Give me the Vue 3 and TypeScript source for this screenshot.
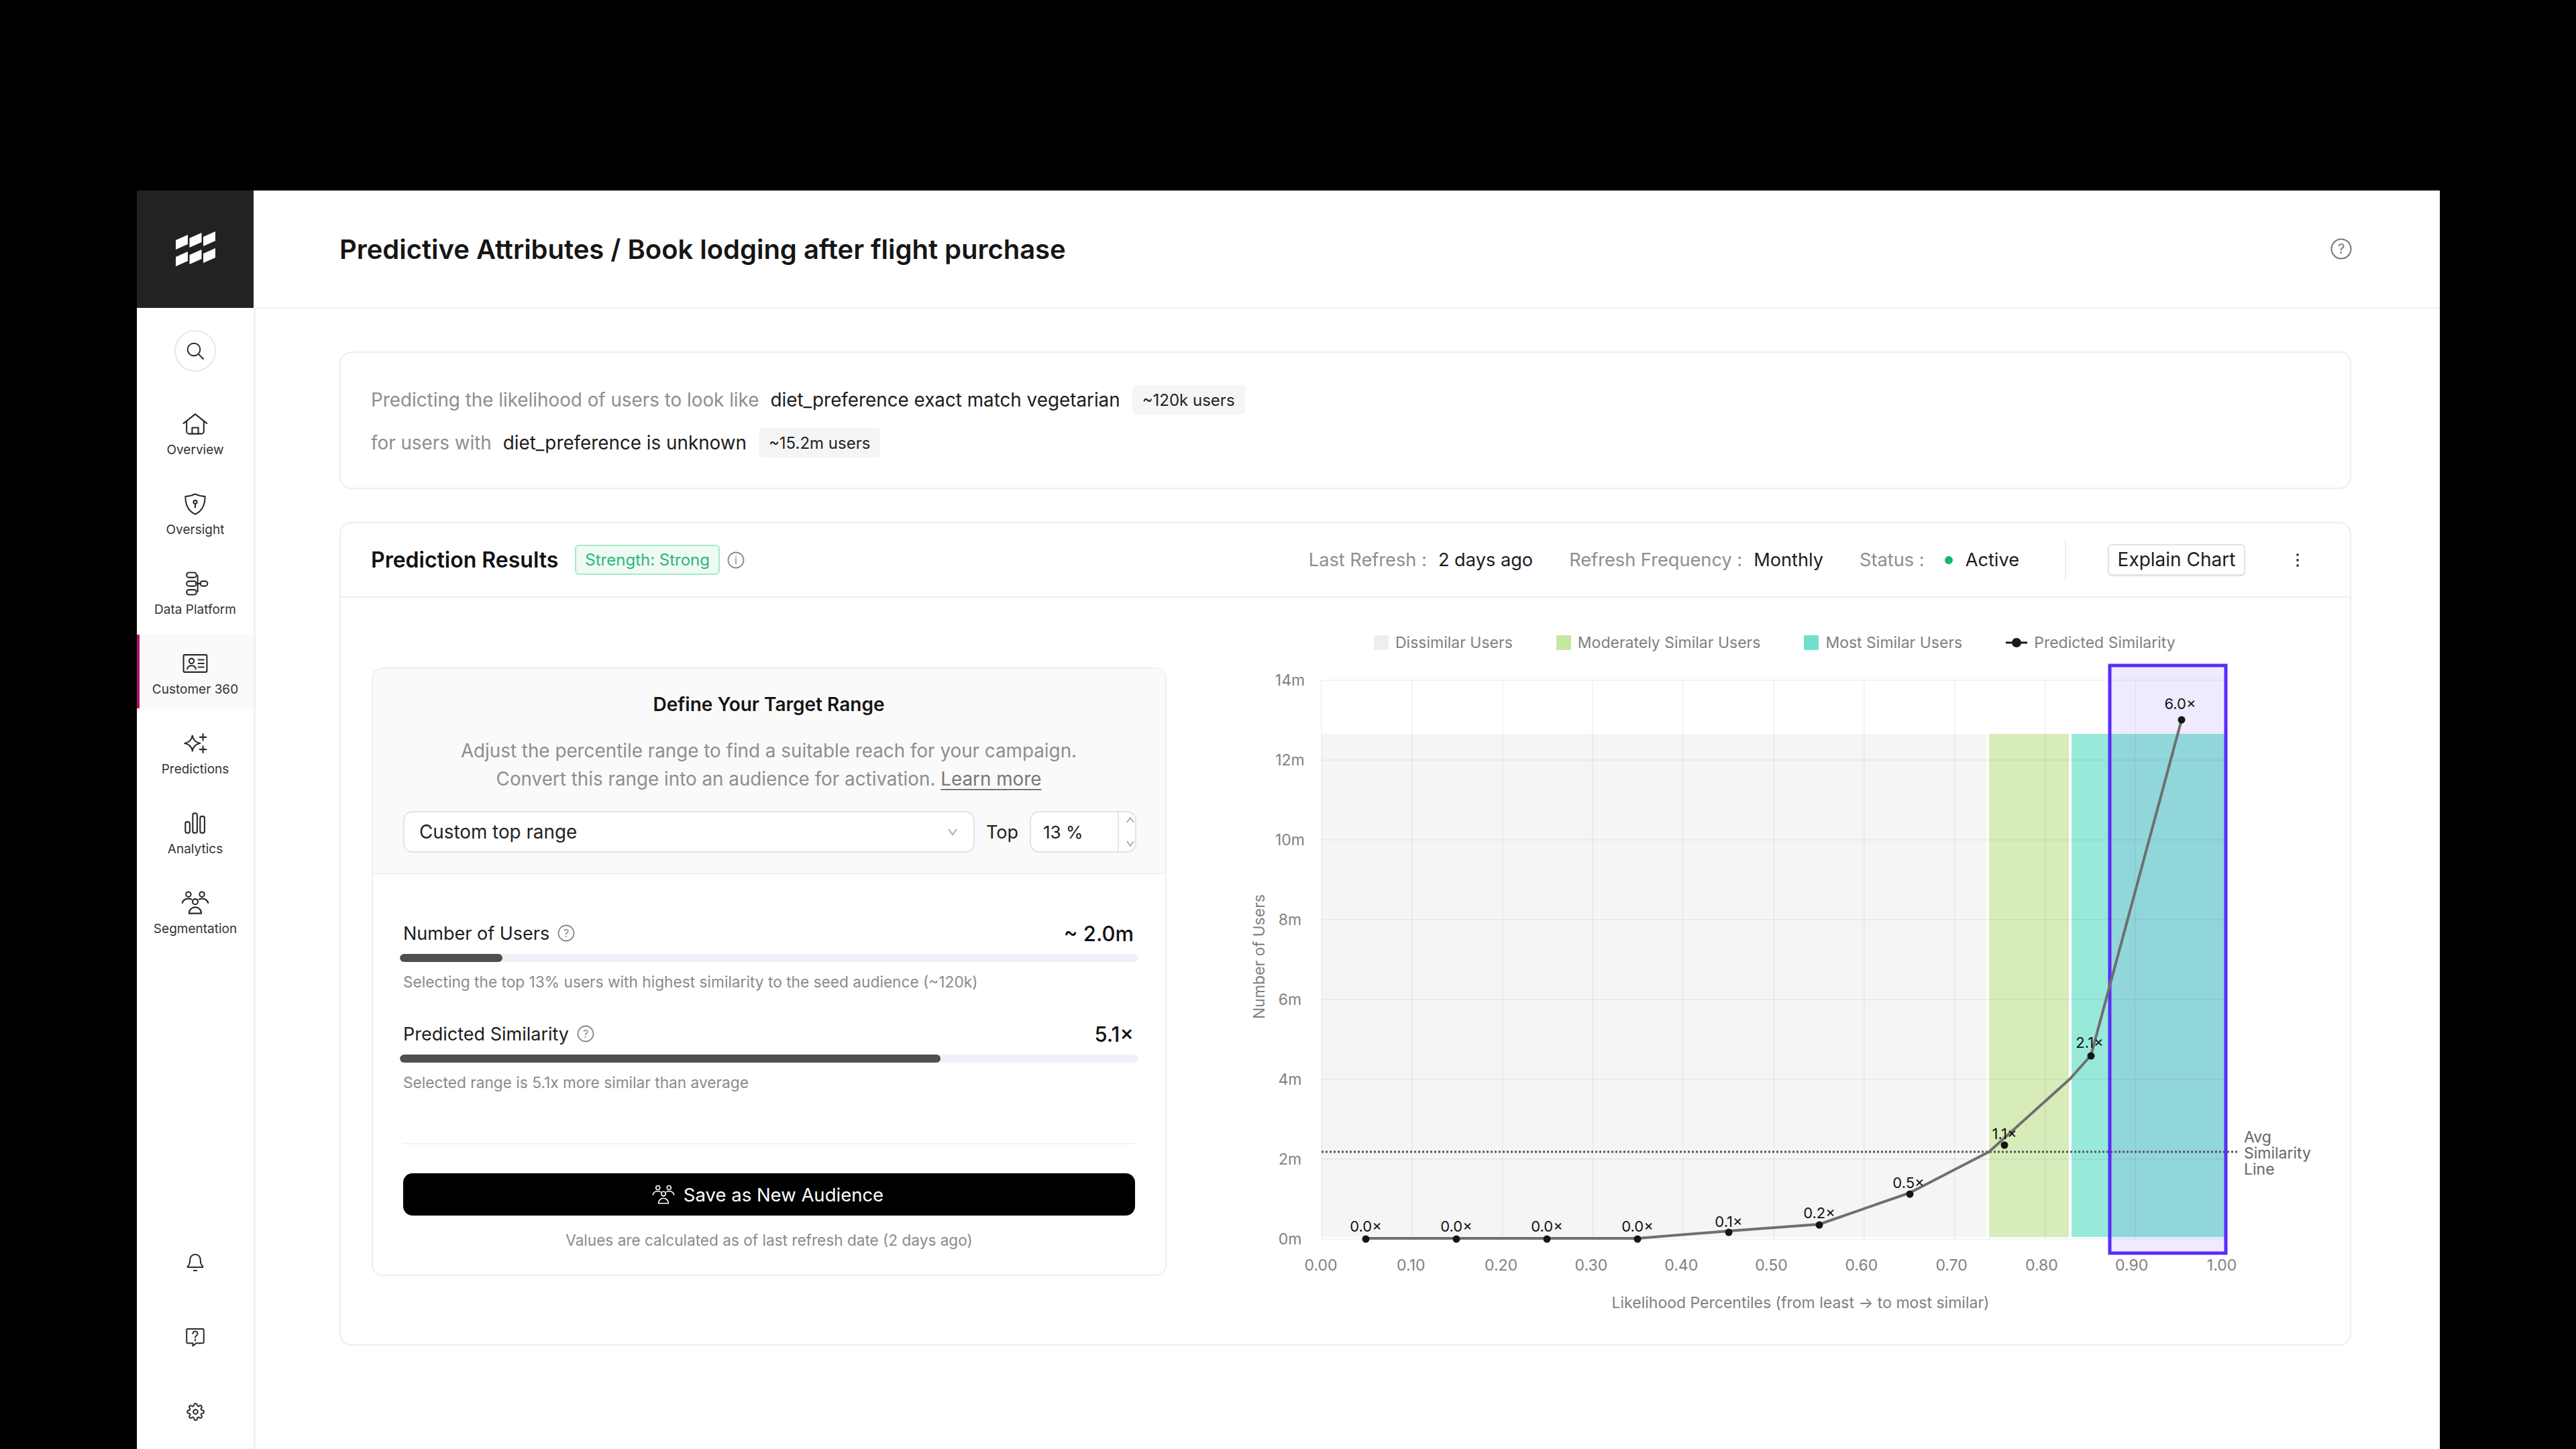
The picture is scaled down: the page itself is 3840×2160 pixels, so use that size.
<script setup lang="ts">
const circle = (cx: number, cy: number, r: number): string =>
  `M${cx - r} ${cy}a${r} ${r} 0 1 0 ${r * 2} 0a${r} ${r} 0 1 0 ${-r * 2} 0z`

interface NavItem { label: string; active?: boolean; paths: string[] }

const nav: NavItem[] = [
  { label: 'Overview', paths: ['M2.5 11.5 12 4l9.500 7.500', 'M5 10v8a2 2 0 0 0 2 2h10a2 2 0 0 0 2-2v-8', 'M9.500 20v-5h5v5'] },
  { label: 'Oversight', paths: ['M12 4c2.800 1.400 5.300 2 8 2 0 7-2.500 12-8 14.500C6.500 18 4 13 4 6c2.700 0 5.200-.6 8-2z', circle(12, 10.500, 1.400), 'M12 12v3'] },
  { label: 'Data Platform', paths: ['M7 3h4a1.500 1.500 0 0 1 0 4H7a1.500 1.500 0 0 1 0-4z', 'M7 10h4a1.500 1.500 0 0 1 0 4H7a1.500 1.500 0 0 1 0-4z', 'M7 17h4a1.500 1.500 0 0 1 0 4H7a1.500 1.500 0 0 1 0-4z', 'M18 10h2a1.500 1.500 0 0 1 0 4h-2a1.500 1.500 0 0 1 0-4z', 'M12.500 12h4M14 5.500V18.500'] },
  { label: 'Customer 360', active: true, paths: ['M3.500 5h17a1 1 0 0 1 1 1v12a1 1 0 0 1-1 1h-17a1 1 0 0 1-1-1V6a1 1 0 0 1 1-1z', circle(9, 10, 2), 'M5.500 16.500c.4-1.800 1.800-2.700 3.500-2.700s3.100.9 3.500 2.700', 'M14.500 9H19M14.500 12H19M14.500 15H19'] },
  { label: 'Predictions', paths: ['M9.700 5.700c.6 3.600 2.700 5.700 6.300 6.300-3.600.6-5.700 2.700-6.300 6.300-.6-3.600-2.700-5.700-6.300-6.300 3.600-.6 5.700-2.700 6.300-6.300z', 'M18.300 4.400v5.200M15.700 7h5.200', 'M18.300 14.400v5.200M15.700 17h5.200'] },
  { label: 'Analytics', paths: ['M5.400 11h.8A1.400 1.400 0 0 1 7.600 12.400v6.200a1.400 1.400 0 0 1-1.400 1.400h-.8A1.400 1.400 0 0 1 4 18.600v-6.200A1.400 1.400 0 0 1 5.400 11z', 'M11.400 4h.8a1.400 1.400 0 0 1 1.400 1.400v13.200a1.400 1.400 0 0 1-1.400 1.400h-.8a1.400 1.400 0 0 1-1.400-1.400V5.400A1.400 1.400 0 0 1 11.400 4z', 'M17.400 6.500h.8a1.400 1.400 0 0 1 1.400 1.400v10.700a1.400 1.400 0 0 1-1.400 1.400h-.8a1.400 1.400 0 0 1-1.400-1.400V7.900a1.400 1.400 0 0 1 1.400-1.400z'] },
  { label: 'Segmentation', paths: [circle(6.500, 5, 2), circle(17.500, 5, 2), circle(12, 11, 2.200), 'M1.500 12c.6-2.200 2.500-3.500 5-3.500 1 0 1.800.2 2.500.6', 'M22.500 12c-.6-2.200-2.500-3.500-5-3.500-1 0-1.800.2-2.500.6', 'M7 20.500c0-3 2.200-5 5-5s5 2 5 5z'] },
]

interface BottomIcon { size: number; paths: string[] }
const bottomIcons: BottomIcon[] = [
  { size: 34, paths: ['M12 3.500c-3.500 0-5.500 2.700-5.500 6 0 3-.7 5-2.500 6.500v1h16v-1c-1.800-1.500-2.500-3.500-2.500-6.500 0-3.300-2-6-5.500-6z', 'M10.500 20.500h3'] },
  { size: 34, paths: ['M4 3.500h16a1 1 0 0 1 1 1v13a1 1 0 0 1-1 1h-7l-3.500 3v-3H4a1 1 0 0 1-1-1v-13a1 1 0 0 1 1-1z', 'M9.500 8.500a2.500 2.500 0 1 1 3.800 2.100c-.9.6-1.300 1-1.300 2', 'M12 14.700v1.100'] },
  { size: 27, paths: ['M12 15a3 3 0 1 0 0-6 3 3 0 0 0 0 6z', 'M19.400 15a1.650 1.650 0 0 0 .33 1.820l.06.06a2 2 0 0 1 0 2.830 2 2 0 0 1-2.830 0l-.06-.06a1.650 1.650 0 0 0-1.820-.33 1.650 1.650 0 0 0-1 1.510V21a2 2 0 0 1-2 2 2 2 0 0 1-2-2v-.09A1.650 1.650 0 0 0 9 19.400a1.650 1.650 0 0 0-1.820.33l-.06.06a2 2 0 0 1-2.830 0 2 2 0 0 1 0-2.830l.06-.06a1.650 1.650 0 0 0 .33-1.820 1.650 1.650 0 0 0-1.510-1H3a2 2 0 0 1-2-2 2 2 0 0 1 2-2h.09A1.650 1.650 0 0 0 4.600 9a1.650 1.650 0 0 0-.33-1.820l-.06-.06a2 2 0 0 1 0-2.830 2 2 0 0 1 2.830 0l.06.06a1.650 1.650 0 0 0 1.820.33H9a1.650 1.650 0 0 0 1-1.510V3a2 2 0 0 1 2-2 2 2 0 0 1 2 2v.09a1.650 1.650 0 0 0 1 1.510 1.650 1.650 0 0 0 1.820-.33l.06-.06a2 2 0 0 1 2.830 0 2 2 0 0 1 0 2.830l-.06.06a1.650 1.650 0 0 0-.33 1.820V9a1.650 1.650 0 0 0 1.510 1H21a2 2 0 0 1 2 2 2 2 0 0 1-2 2h-.09a1.650 1.650 0 0 0-1.510 1z'] },
]

const logoOffsets = [5, 2, 0]
const logoCells = [0, 1, 2].flatMap((c) => [0, 1].map((r) => {
  const x = c * 20.5
  const y = r * 25 + logoOffsets[c]
  return `${x},${y + 8} ${x + 18},${y} ${x + 18},${y + 14} ${x},${y + 22}`
}))

interface Metric { label: string; value: string; pct: number; sub: string }
const metrics: Metric[] = [
  { label: 'Number of Users', value: '~ 2.0m', pct: 13.9, sub: 'Selecting the top 13% users with highest similarity to the seed audience (~120k)' },
  { label: 'Predicted Similarity', value: '5.1×', pct: 73.2, sub: 'Selected range is 5.1x more similar than average' },
]

const legend = [
  { label: 'Dissimilar Users', color: '#eeeeee' },
  { label: 'Moderately Similar Users', color: '#c5e8a0' },
  { label: 'Most Similar Users', color: '#70e0cc' },
]

const Y0 = 1847
const yTicks = [0, 2, 4, 6, 8, 10, 12, 14].map((v) => ({ label: `${v}m`, y: Y0 - (v / 2) * 119 }))
const xGrid = Array.from({ length: 10 }, (_, i) => 1970 + i * 134.8)
const xTicks = Array.from({ length: 11 }, (_, i) => ({ label: (i / 10).toFixed(2), x: 1969 + i * 134.3 }))

const curve = '2036,1846 2441,1846 2577,1835 2712,1825 2847,1778 2965,1717 3086,1608 3117,1573 3252,1073'
const points = [
  { x: 2036, y: 1847, tx: 2036, ty: 1828, label: '0.0×' },
  { x: 2171, y: 1847, tx: 2171, ty: 1828, label: '0.0×' },
  { x: 2306, y: 1847, tx: 2306, ty: 1828, label: '0.0×' },
  { x: 2441, y: 1847, tx: 2441, ty: 1828, label: '0.0×' },
  { x: 2577, y: 1837, tx: 2577, ty: 1821, label: '0.1×' },
  { x: 2712, y: 1826, tx: 2712, ty: 1808, label: '0.2×' },
  { x: 2847, y: 1780, tx: 2845, ty: 1763, label: '0.5×' },
  { x: 2988, y: 1707, tx: 2988, ty: 1690, label: '1.1×' },
  { x: 3117, y: 1574, tx: 3115, ty: 1554, label: '2.1×' },
  { x: 3252, y: 1073, tx: 3250, ty: 1049, label: '6.0×' },
]
const avgLines = [
  { t: 'Avg', y: 1695 },
  { t: 'Similarity', y: 1719 },
  { t: 'Line', y: 1743 },
]
</script>

<template>
  <div class="page">
    <div class="app">
      <aside class="side">
        <div class="logo">
          <svg width="59" height="54" viewBox="0 0 59 54"><polygon v-for="p in logoCells" :key="p" :points="p" fill="#fff" /></svg>
        </div>
        <div class="rail">
          <div class="search">
            <svg width="32" height="32" viewBox="0 0 24 24" class="ico search-ico"><circle cx="10.500" cy="10.500" r="7" /><path d="M15.500 15.500 21 21" /></svg>
          </div>
          <nav class="nav">
            <div v-for="n in nav" :key="n.label" class="nav-item" :class="{ active: n.active }">
              <svg width="44" height="44" viewBox="0 0 24 24" class="ico nav-ico"><path v-for="d in n.paths" :key="d" :d="d" /></svg>
              <span class="nav-label">{{ n.label }}</span>
            </div>
          </nav>
          <div class="bottom">
            <div v-for="(b, i) in bottomIcons" :key="i" class="bottom-box">
              <svg :width="b.size" :height="b.size" viewBox="0 0 24 24" class="ico" :style="{ strokeWidth: 48 / b.size }"><path v-for="d in b.paths" :key="d" :d="d" /></svg>
            </div>
          </div>
        </div>
      </aside>

      <main class="main">
        <header class="top">
          <h1 class="title">Predictive Attributes / Book lodging after flight purchase</h1>
          <svg width="32" height="32" viewBox="0 0 32 32" class="hint-lg"><circle cx="16" cy="16" r="14.500" /><text x="16" y="23" text-anchor="middle">?</text></svg>
        </header>

        <div class="content">
          <section class="card summary">
            <div class="sum-row">
              <span class="muted">Predicting the likelihood of users to look like</span>
              <span class="strong">diet_preference exact match vegetarian</span>
              <span class="chip">~120k users</span>
            </div>
            <div class="sum-row">
              <span class="muted">for users with</span>
              <span class="strong">diet_preference is unknown</span>
              <span class="chip">~15.2m users</span>
            </div>
          </section>

          <section class="card results">
            <div class="res-head">
              <h2 class="res-title">Prediction Results</h2>
              <span class="badge">Strength: Strong</span>
              <svg width="26" height="26" viewBox="0 0 26 26" class="hint"><circle cx="13" cy="13" r="11.500" /><text x="13" y="19" text-anchor="middle">i</text></svg>
              <div class="meta">
                <span class="meta-pair"><span class="muted">Last Refresh :</span><span class="strong">2 days ago</span></span>
                <span class="meta-pair"><span class="muted">Refresh Frequency :</span><span class="strong">Monthly</span></span>
                <span class="meta-pair"><span class="muted">Status :</span><i class="dot"></i><span class="strong">Active</span></span>
                <span class="vline"></span>
                <button class="explain">Explain Chart</button>
                <span class="kebab"><i></i><i></i><i></i></span>
              </div>
            </div>

            <div class="res-body">
              <div class="panel">
                <div class="panel-head">
                  <h3 class="panel-title">Define Your Target Range</h3>
                  <p class="panel-desc">Adjust the percentile range to find a suitable reach for your campaign.<br />Convert this range into an audience for activation. <a class="link">Learn more</a></p>
                  <div class="controls">
                    <div class="select">
                      <span>Custom top range</span>
                      <svg width="18" height="12" viewBox="0 0 18 12" class="chev"><path d="M3 2l6 8 6-8" /></svg>
                    </div>
                    <span class="top-label">Top</span>
                    <div class="num">
                      <span class="num-val">13 %</span>
                      <div class="spin">
                        <svg width="24" height="60" viewBox="0 0 24 60" class="chev"><path d="M12 16l5-7 5 7M12 44l5 7 5-7" /></svg>
                      </div>
                    </div>
                  </div>
                </div>
                <div class="panel-body">
                  <div class="metrics">
                    <div v-for="m in metrics" :key="m.label" class="metric">
                      <div class="metric-head">
                        <span class="metric-label">{{ m.label }}</span>
                        <svg width="26" height="26" viewBox="0 0 26 26" class="hint"><circle cx="13" cy="13" r="11.500" /><text x="13" y="19" text-anchor="middle">?</text></svg>
                        <span class="metric-value">{{ m.value }}</span>
                      </div>
                      <div class="track"><div class="fill" :style="{ width: m.pct + '%' }"></div></div>
                      <div class="metric-sub">{{ m.sub }}</div>
                    </div>
                  </div>
                  <div class="hr"></div>
                  <button class="save">
                    <svg width="36" height="36" viewBox="0 0 24 24" class="ico-w">
                      <circle cx="6.500" cy="5" r="2" /><circle cx="17.500" cy="5" r="2" /><circle cx="12" cy="11" r="2.200" />
                      <path d="M1.500 12c.6-2.200 2.500-3.500 5-3.500 1 0 1.800.2 2.500.6M22.500 12c-.6-2.200-2.500-3.500-5-3.500-1 0-1.800.2-2.500.6M7 20.500c0-3 2.200-5 5-5s5 2 5 5z" />
                    </svg>
                    <span>Save as New Audience</span>
                  </button>
                  <div class="foot">Values are calculated as of last refresh date (2 days ago)</div>
                </div>
              </div>

              <div class="chart">
                <div class="legend">
                  <span v-for="l in legend" :key="l.label" class="leg"><i class="swatch" :style="{ background: l.color }"></i>{{ l.label }}</span>
                  <span class="leg">
                    <svg width="32" height="22" viewBox="0 0 32 22"><path d="M0 11h32" stroke="#1a1a1a" stroke-width="3" /><circle cx="16" cy="11" r="7" fill="#1a1a1a" /></svg>
                    Predicted Similarity
                  </span>
                </div>
                <svg class="plot" width="1700" height="996" viewBox="1800 984 1700 996">
                  <rect x="1970" y="1094" width="991" height="750" fill="#f5f5f5" />
                  <rect x="2965" y="1094" width="119" height="750" fill="#d7ecb9" />
                  <rect x="3088" y="1094" width="231" height="750" fill="#97e9da" />
                  <line v-for="t in yTicks" :key="t.label" x1="1970" x2="3319" :y1="t.y" :y2="t.y" class="grid" />
                  <line v-for="x in xGrid" :key="x" :x1="x" :x2="x" y1="1014" y2="1847" class="grid" />
                  <rect x="3145" y="992" width="173" height="876" fill="rgba(100,50,240,.1)" stroke="#5a2df5" stroke-width="5" />
                  <line x1="1970" x2="3336" y1="1717" y2="1717" class="avg" />
                  <polyline :points="curve" class="curve" />
                  <circle v-for="p in points" :key="p.x" :cx="p.x" :cy="p.y" r="5.500" fill="#151515" />
                  <text v-for="p in points" :key="'l' + p.x" :x="p.tx" :y="p.ty" class="pt-label">{{ p.label }}</text>
                  <text v-for="t in yTicks" :key="'y' + t.label" x="1923" :y="t.y" class="tick">{{ t.label }}</text>
                  <text v-for="t in xTicks" :key="t.label" :x="t.x" y="1886" class="tick">{{ t.label }}</text>
                  <text x="0" y="0" class="tick" transform="translate(1877 1426) rotate(-90)">Number of Users</text>
                  <text x="2684" y="1942" class="tick">Likelihood Percentiles (from least → to most similar)</text>
                  <text v-for="a in avgLines" :key="a.t" x="3345" :y="a.y" class="avg-label">{{ a.t }}</text>
                </svg>
              </div>
            </div>
          </section>
        </div>
      </main>
    </div>
  </div>
</template>

<style>
html, body { margin: 0; background: #000; }
</style>

<style scoped>
.page { box-sizing: border-box; width: 3840px; height: 2160px; background: #000; padding: 284px 203px 0 204px; font-family: Inter, "Noto Sans", sans-serif; color: #1a1a1a; overflow: hidden; }
.app { display: flex; height: 1876px; background: #fff; }
.side { width: 177px; flex: none; display: flex; flex-direction: column; }
.logo { width: 174px; height: 175px; background: #222; display: flex; align-items: center; justify-content: center; flex: none; }
.rail { flex: 1; border-right: 3px solid #f1f1f1; display: flex; flex-direction: column; align-items: center; padding-top: 33px; }
.search { width: 62px; height: 62px; box-sizing: border-box; border: 2px solid #e8e8e8; border-radius: 50%; display: flex; align-items: center; justify-content: center; flex: none; }
.ico { fill: none; stroke: #2a2a2a; stroke-width: 1.150; stroke-linecap: round; stroke-linejoin: round; flex: none; }
.search-ico { stroke-width: 1.500; }
.nav { display: flex; flex-direction: column; gap: 9px; margin-top: 35px; width: 100%; }
.nav-item { box-sizing: border-box; height: 110px; padding-top: 21px; display: flex; flex-direction: column; align-items: center; position: relative; }
.nav-item.active { background: #fafafa; }
.nav-item.active::before { content: ""; position: absolute; left: 0; top: 0; bottom: 0; width: 4px; background: #b0106c; }
.nav-label { font-size: 19px; line-height: 24px; margin-top: 5px; color: #333; white-space: nowrap; }
.bottom { margin-top: auto; padding-bottom: 36px; display: flex; flex-direction: column; align-items: center; gap: 71px; }
.bottom-box { width: 40px; height: 40px; display: flex; align-items: center; justify-content: center; }

.main { flex: 1; min-width: 0; display: flex; flex-direction: column; }
.top { box-sizing: border-box; height: 176px; border-bottom: 2px solid #f1f1f1; display: flex; align-items: center; justify-content: space-between; padding: 0 131px 0 125px; flex: none; }
.title { margin: 0; font-size: 40px; font-weight: 600; color: #151515; letter-spacing: -0.03px; }
.hint-lg { fill: none; stroke: #777; stroke-width: 2; }
.hint-lg text { fill: #777; stroke: none; font-size: 20px; }
.hint { fill: none; stroke: #888; stroke-width: 1.800; flex: none; }
.hint text { fill: #888; stroke: none; font-size: 16px; }
.content { padding: 64px 132px 0 125px; display: flex; flex-direction: column; gap: 49px; }
.card { box-sizing: border-box; border: 2px solid #eeeeee; border-radius: 18px; }
.summary { height: 205px; padding: 48px 45px 0; display: flex; flex-direction: column; gap: 20px; }
.sum-row { display: flex; align-items: center; height: 44px; font-size: 27.800px; white-space: nowrap; }
.muted { color: #8e8e8e; }
.strong { color: #1c1c1c; }
.sum-row .strong { margin-left: 17px; }
.chip { margin-left: 18px; height: 44px; padding: 0 15px; background: #f5f5f5; border-radius: 6px; font-size: 24px; display: flex; align-items: center; color: #222; }
.results { height: 1228px; }
.res-head { box-sizing: border-box; height: 111px; border-bottom: 2px solid #eeeeee; padding: 0 45px; display: flex; align-items: center; white-space: nowrap; }
.res-title { margin: 0; font-size: 32px; font-weight: 600; color: #111; }
.badge { margin-left: 25px; box-sizing: border-box; height: 45px; padding: 0 13px; border: 2px solid #a7eac6; background: #eefaf3; color: #2fb673; border-radius: 6px; font-size: 24px; display: flex; align-items: center; }
.res-head .hint { margin-left: 11px; }
.meta { margin-left: auto; display: flex; align-items: center; font-size: 27.200px; }
.meta-pair { display: flex; align-items: center; gap: 17px; margin-right: 54px; }
.dot { width: 12px; height: 12px; border-radius: 50%; background: #12b76a; margin: 0 2px 0 13px; }
.vline { width: 2px; height: 60px; background: #eeeeee; margin: 0 62px 0 14px; }
.explain { width: 205px; height: 48px; box-sizing: border-box; background: #fff; border: 2px solid #e2e2e2; border-bottom-width: 3px; border-radius: 6px; font: inherit; font-size: 28px; color: #1c1c1c; padding: 0; white-space: nowrap; }
.kebab { margin-left: 76px; margin-right: 31px; display: flex; flex-direction: column; gap: 4px; }
.kebab i { width: 4px; height: 4px; border-radius: 50%; background: #444; }
.res-body { display: flex; align-items: flex-start; }
.panel { box-sizing: border-box; width: 1185px; height: 907px; margin: 104px 0 0 46px; border: 2px solid #efefef; border-radius: 16px; overflow: hidden; flex: none; }
.panel-head { box-sizing: border-box; height: 306px; background: #fafafa; border-bottom: 2px solid #f0f0f0; padding: 35px 46px 0 45px; text-align: center; }
.panel-title { margin: 0; font-size: 28px; line-height: 36px; font-weight: 600; color: #151515; }
.panel-desc { margin: 30px 0 0; font-size: 27.800px; line-height: 42px; color: #8e8e8e; white-space: nowrap; }
.link { color: #777; text-decoration: underline; text-underline-offset: 5px; }
.controls { display: flex; align-items: center; margin: 27px -3px 0 0; gap: 17px; }
.select { flex: 1; box-sizing: border-box; height: 62px; background: #fff; border: 2px solid #e3e3e3; border-radius: 14px; padding: 0 22px; display: flex; align-items: center; justify-content: space-between; font-size: 27.800px; color: #222; }
.chev { fill: none; stroke: #aaa; stroke-width: 2; flex: none; }
.top-label { font-size: 27px; color: #222; }
.num { box-sizing: border-box; width: 159px; height: 62px; background: #fff; border: 2px solid #e3e3e3; border-radius: 14px; display: flex; align-items: center; justify-content: space-between; overflow: hidden; font-size: 26px; color: #222; padding-left: 18px; }
.spin { width: 24px; height: 60px; border-left: 2px solid #e3e3e3; flex: none; }
.panel-body { padding: 66px 45px 0; }
.metrics { display: flex; flex-direction: column; gap: 39px; }
.metric-head { height: 44px; display: flex; align-items: center; gap: 12px; padding-right: 2px; }
.metric-label { font-size: 27px; color: #1c1c1c; }
.metric-value { margin-left: auto; font-size: 31px; font-weight: 500; color: #111; }
.track { height: 12px; margin: 9px -5px 0; background: #f1f0f6; border-radius: 6px; overflow: hidden; }
.fill { height: 100%; background: #4f4f4b; border-radius: 6px; }
.metric-sub { margin-top: 14px; font-size: 22.700px; line-height: 32px; color: #8a8a8a; white-space: nowrap; }
.hr { height: 2px; background: #f3f3f3; margin-top: 74px; }
.save { width: 100%; height: 63px; margin-top: 43px; border: 0; padding: 0 5px 0 0; background: #000; color: #fff; border-radius: 14px; font: inherit; font-size: 27.500px; display: flex; align-items: center; justify-content: center; gap: 12px; }
.ico-w { fill: none; stroke: #fff; stroke-width: 1.100; stroke-linejoin: round; stroke-linecap: round; }
.foot { margin-top: 21px; text-align: center; font-size: 22.600px; line-height: 32px; color: #8a8a8a; }
.chart { margin-top: 39px; margin-left: 61px; flex: none; width: 1700px; }
.legend { height: 54px; padding: 1px 0 0 248px; box-sizing: border-box; display: flex; align-items: center; gap: 65px; font-size: 23px; color: #808080; white-space: nowrap; }
.leg { display: flex; align-items: center; gap: 10px; }
.swatch { width: 22px; height: 22px; display: block; }
.plot { display: block; }
.grid { stroke: rgba(0, 0, 0, .045); stroke-width: 2; }
.avg { stroke: #555; stroke-width: 3; stroke-dasharray: 3 3; }
.curve { fill: none; stroke: #6f6f6b; stroke-width: 4; stroke-linejoin: round; }
.pt-label { font-size: 22px; fill: #111; text-anchor: middle; dominant-baseline: central; }
.tick { font-size: 23px; fill: #808080; text-anchor: middle; dominant-baseline: central; }
.avg-label { font-size: 23px; fill: #666; dominant-baseline: central; }
</style>
